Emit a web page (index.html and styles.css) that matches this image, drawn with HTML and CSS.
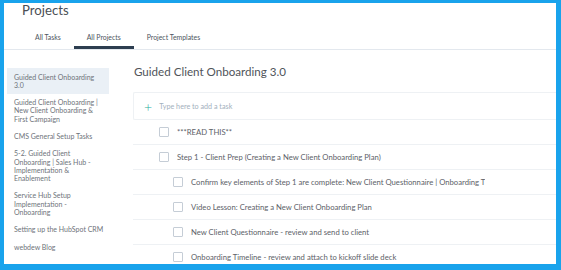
FILE: index.html
```html
<!DOCTYPE html>
<html>
<head>
<meta charset="utf-8">
<link rel="stylesheet" href="styles.css">
</head>
<body>
<div class="frame">
  <header class="top">
    <h1 class="title">Projects</h1>
    <nav class="tabs">
      <span class="tab">All Tasks</span>
      <span class="tab active">All Projects</span>
      <span class="tab">Project Templates</span>
    </nav>
  </header>
  <div class="content">
    <aside class="side">
      <div class="side-item active">Guided Client Onboarding 3.0</div>
      <div class="side-item">Guided Client Onboarding | New Client Onboarding &amp; First Campaign</div>
      <div class="side-item">CMS General Setup Tasks</div>
      <div class="side-item">5-2. Guided Client Onboarding | Sales Hub - Implementation &amp; Enablement</div>
      <div class="side-item">Service Hub Setup Implementation - Onboarding</div>
      <div class="side-item">Setting up the HubSpot CRM</div>
      <div class="side-item">webdew Blog</div>
    </aside>
    <main class="main">
      <h2 class="project-title">Guided Client Onboarding 3.0</h2>
      <div class="add-task">
        <span class="plus">+</span>
        <span class="placeholder">Type here to add a task</span>
      </div>
      <div class="task">
        <div class="cell lvl1"><span class="box"></span><span class="name">***READ THIS**</span></div>
      </div>
      <div class="task">
        <div class="cell lvl1"><span class="box"></span><span class="name">Step 1 - Client Prep (Creating a New Client Onboarding Plan)</span></div>
      </div>
      <div class="task">
        <div class="cell lvl2"><span class="box"></span><span class="name">Confirm key elements of Step 1 are complete: New Client Questionnaire | Onboarding Timeline</span></div>
      </div>
      <div class="task">
        <div class="cell lvl2"><span class="box"></span><span class="name">Video Lesson: Creating a New Client Onboarding Plan</span></div>
      </div>
      <div class="task">
        <div class="cell lvl2"><span class="box"></span><span class="name">New Client Questionnaire - review and send to client</span></div>
      </div>
      <div class="task">
        <div class="cell lvl2"><span class="box"></span><span class="name">Onboarding Timeline - review and attach to kickoff slide deck</span></div>
      </div>
    </main>
  </div>
</div>
</body>
</html>
```

FILE: styles.css
```css
html, body {
  margin: 0;
  padding: 0;
}
body {
  font-family: "Lato", "Open Sans", sans-serif;
  background: #19a3ec;
}
.frame {
  width: 561px;
  height: 270px;
  box-sizing: border-box;
  border-style: solid;
  border-color: #19a3ec;
  border-width: 3px 5px 6px 4px;
  background: #ffffff;
  overflow: hidden;
  display: flex;
  flex-direction: column;
}
.top {
  border-bottom: 1px solid #e3e8ee;
}
.title {
  margin: 0;
  padding-left: 18px;
  font-size: 13.2px;
  line-height: 14px;
  font-weight: 400;
  color: #4b4f55;
}
.tabs {
  display: flex;
  margin-top: 15px;
  padding-left: 18px;
}
.tab {
  font-size: 6.9px;
  line-height: 10px;
  color: #4d5560;
  padding: 0 13px 4px;
  border-bottom: 3px solid transparent;
}
.tab.active {
  border-bottom-color: #2d3e50;
}
.content {
  display: flex;
  flex: 1;
  min-height: 0;
}
.side {
  width: 102px;
  margin-left: 3px;
  padding-top: 18px;
  flex: none;
}
.side-item {
  font-size: 7px;
  line-height: 8.3px;
  color: #6e737a;
  padding: 4.5px 5.5px 4.5px 7px;
}
.side-item.active {
  background: #eaf0f6;
}
.main {
  flex: 1;
  margin-left: 24px;
  padding-top: 14px;
  min-width: 0;
}
.project-title {
  margin: 0 0 12px 1px;
  font-size: 11.6px;
  line-height: 16px;
  font-weight: 400;
  color: #50545a;
}
.add-task {
  height: 26px;
  border: 1px solid #eef1f4;
  border-right: none;
  border-radius: 2px 0 0 2px;
  display: flex;
  align-items: center;
  padding-left: 10px;
  gap: 7px;
}
.plus {
  font-size: 14px;
  line-height: 13px;
  color: #1fae9b;
  font-weight: 300;
}
.placeholder {
  font-size: 7.2px;
  color: #a3b0bd;
}
.task {
  height: 24px;
  border-bottom: 1px solid #eef1f4;
  display: flex;
  align-items: center;
}
.cell {
  width: 352px;
  overflow: hidden;
  white-space: nowrap;
  display: flex;
  align-items: center;
}
.cell.lvl1 {
  padding-left: 26px;
  box-sizing: border-box;
}
.cell.lvl2 {
  padding-left: 40px;
  box-sizing: border-box;
}
.box {
  width: 8px;
  height: 8px;
  border: 1px solid #c5cdd6;
  border-radius: 1px;
  flex: none;
  margin-right: 8px;
  background: #fff;
}
.name {
  font-size: 7.7px;
  color: #5d6168;
}
```
